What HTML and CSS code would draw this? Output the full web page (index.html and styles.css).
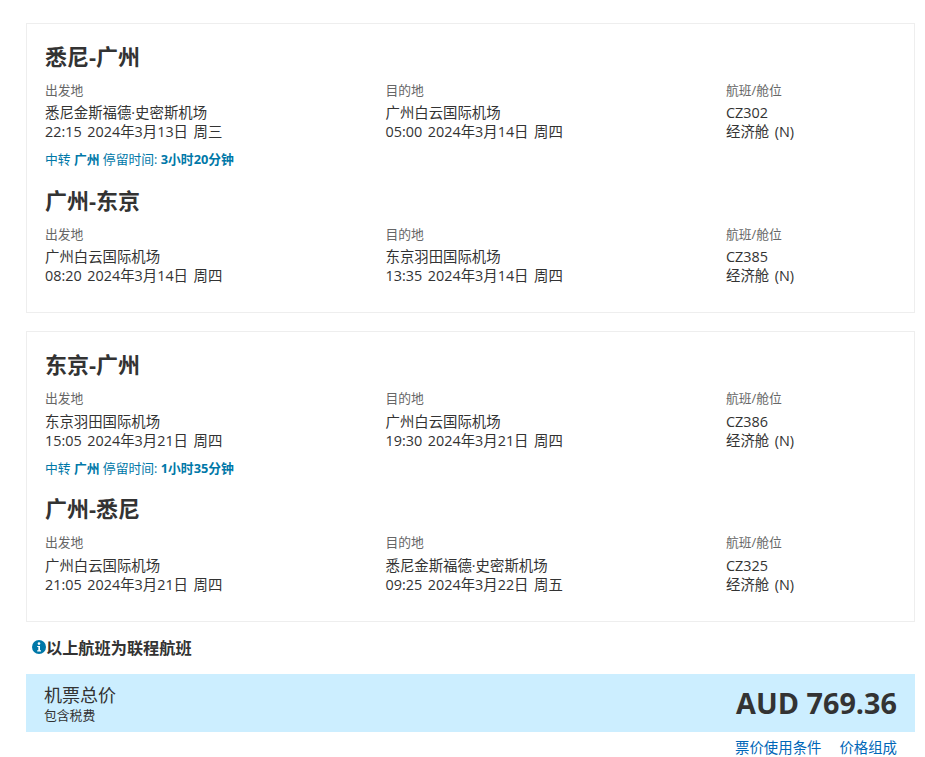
FILE: index.html
```html
<!DOCTYPE html>
<html lang="zh-CN">
<head>
<meta charset="utf-8">
<title>行程</title>
<link rel="stylesheet" href="styles.css">
</head>
<body>
<main class="page">
  <section class="card">
    <h2 class="route">悉尼-广州</h2>
    <div class="leg">
      <div class="col"><div class="label">出发地</div><div class="val">悉尼金斯福德·史密斯机场</div><div class="val">22:15 2024年3月13日 周三</div></div>
      <div class="col"><div class="label">目的地</div><div class="val">广州白云国际机场</div><div class="val">05:00 2024年3月14日 周四</div></div>
      <div class="col last"><div class="label">航班/舱位</div><div class="val">CZ302</div><div class="val">经济舱 (N)</div></div>
    </div>
    <div class="transfer">中转 <b>广州</b> 停留时间: <b>3小时20分钟</b></div>
    <h2 class="route">广州-东京</h2>
    <div class="leg">
      <div class="col"><div class="label">出发地</div><div class="val">广州白云国际机场</div><div class="val">08:20 2024年3月14日 周四</div></div>
      <div class="col"><div class="label">目的地</div><div class="val">东京羽田国际机场</div><div class="val">13:35 2024年3月14日 周四</div></div>
      <div class="col last"><div class="label">航班/舱位</div><div class="val">CZ385</div><div class="val">经济舱 (N)</div></div>
    </div>
  </section>
  <section class="card">
    <h2 class="route">东京-广州</h2>
    <div class="leg">
      <div class="col"><div class="label">出发地</div><div class="val">东京羽田国际机场</div><div class="val">15:05 2024年3月21日 周四</div></div>
      <div class="col"><div class="label">目的地</div><div class="val">广州白云国际机场</div><div class="val">19:30 2024年3月21日 周四</div></div>
      <div class="col last"><div class="label">航班/舱位</div><div class="val">CZ386</div><div class="val">经济舱 (N)</div></div>
    </div>
    <div class="transfer">中转 <b>广州</b> 停留时间: <b>1小时35分钟</b></div>
    <h2 class="route">广州-悉尼</h2>
    <div class="leg">
      <div class="col"><div class="label">出发地</div><div class="val">广州白云国际机场</div><div class="val">21:05 2024年3月21日 周四</div></div>
      <div class="col"><div class="label">目的地</div><div class="val">悉尼金斯福德·史密斯机场</div><div class="val">09:25 2024年3月22日 周五</div></div>
      <div class="col last"><div class="label">航班/舱位</div><div class="val">CZ325</div><div class="val">经济舱 (N)</div></div>
    </div>
  </section>
  <div class="notice">
    <svg class="info" viewBox="0 0 14 14" width="14" height="14" aria-hidden="true"><circle cx="7" cy="7" r="7" fill="#0078a8"/><circle cx="7" cy="3.6" r="1.3" fill="#fff"/><path d="M5.2 5.9H8v4.4h1v1.1H5.2v-1.1h1.1V7H5.2z" fill="#fff"/></svg>
    <span>以上航班为联程航班</span>
  </div>
  <div class="total">
    <div class="total-left"><div class="total-title">机票总价</div><div class="total-sub">包含税费</div></div>
    <div class="price">AUD 769.36</div>
  </div>
  <div class="links"><a href="#">票价使用条件</a><a href="#">价格组成</a></div>
</main>
</body>
</html>
```

FILE: styles.css
```css
* { box-sizing: border-box; }
html, body { margin: 0; padding: 0; background: #fff; }
body {
  font-family: "Open Sans", "Noto Sans CJK SC", sans-serif;
  font-size: 14.4px;
  color: #333;
  overflow: hidden;
  height: 757px;
}
.page { padding: 23px 10px 0 26px; }
.card {
  border: 1px solid #eee;
  padding: 16px 18px 27.3px;
  margin-bottom: 18px;
}
.card + .card { margin-bottom: 0; }
.route {
  margin: 0;
  height: 34px;
  font-size: 22px;
  line-height: 32px;
  font-weight: 700;
  color: #333;
}
.leg { display: flex; margin-top: 7px; }
.col { width: 340.5px; }
.col.last { flex: 1; width: auto; }
.label { color: #666; font-size: 12.8px; line-height: 19px; margin-bottom: 3.2px; }
.val { line-height: 19px; word-spacing: 1.8px; }
.transfer {
  margin-top: 9px;
  margin-bottom: 15.8px;
  font-size: 12.8px;
  line-height: 18px;
  color: #0078a8;
}
.notice {
  display: flex;
  align-items: center;
  margin: 14px 0 0 6px;
  height: 22px;
  font-size: 16.2px;
  font-weight: 700;
  color: #333;
}
.info { flex: none; margin-top: 1px; }
.total {
  margin-top: 16px;
  height: 58px;
  background: #cceeff;
  padding: 0 18px;
  display: flex;
  justify-content: space-between;
  align-items: center;
}
.total-title { font-size: 18px; line-height: 24px; }
.total-sub { font-size: 12.8px; line-height: 16px; }
.price { font-size: 28.8px; font-weight: 700; line-height: 38px; }
.links { display: flex; justify-content: flex-end; gap: 18px; padding: 6px 18px 0 0; }
.links a { color: #0067b8; font-size: 14.4px; line-height: 19px; text-decoration: none; }
```
